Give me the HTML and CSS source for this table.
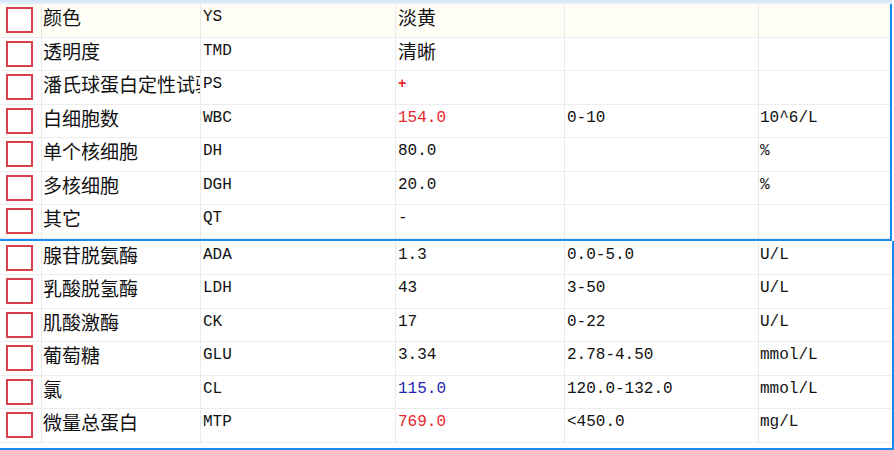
FILE: index.html
```html
<!DOCTYPE html>
<html>
<head>
<meta charset="utf-8">
<link rel="stylesheet" href="styles.css">
</head>
<body>
<div class="topbar"></div>
<div class="group g1">
  <div class="row first"><div class="c chk"><span class="box"></span></div><div class="c name">颜色</div><div class="c code">YS</div><div class="c val cjk">淡黄</div><div class="c rng"></div><div class="c unit"></div></div>
  <div class="row"><div class="c chk"><span class="box"></span></div><div class="c name">透明度</div><div class="c code">TMD</div><div class="c val cjk">清晰</div><div class="c rng"></div><div class="c unit"></div></div>
  <div class="row"><div class="c chk"><span class="box"></span></div><div class="c name">潘氏球蛋白定性试验</div><div class="c code">PS</div><div class="c val red plus">+</div><div class="c rng"></div><div class="c unit"></div></div>
  <div class="row"><div class="c chk"><span class="box"></span></div><div class="c name">白细胞数</div><div class="c code">WBC</div><div class="c val red">154.0</div><div class="c rng">0-10</div><div class="c unit">10^6/L</div></div>
  <div class="row"><div class="c chk"><span class="box"></span></div><div class="c name">单个核细胞</div><div class="c code">DH</div><div class="c val">80.0</div><div class="c rng"></div><div class="c unit">%</div></div>
  <div class="row"><div class="c chk"><span class="box"></span></div><div class="c name">多核细胞</div><div class="c code">DGH</div><div class="c val">20.0</div><div class="c rng"></div><div class="c unit">%</div></div>
  <div class="row"><div class="c chk"><span class="box"></span></div><div class="c name">其它</div><div class="c code">QT</div><div class="c val">-</div><div class="c rng"></div><div class="c unit"></div></div>
</div>
<div class="group g2">
  <div class="row"><div class="c chk"><span class="box"></span></div><div class="c name">腺苷脱氨酶</div><div class="c code">ADA</div><div class="c val">1.3</div><div class="c rng">0.0-5.0</div><div class="c unit">U/L</div></div>
  <div class="row"><div class="c chk"><span class="box"></span></div><div class="c name">乳酸脱氢酶</div><div class="c code">LDH</div><div class="c val">43</div><div class="c rng">3-50</div><div class="c unit">U/L</div></div>
  <div class="row"><div class="c chk"><span class="box"></span></div><div class="c name">肌酸激酶</div><div class="c code">CK</div><div class="c val">17</div><div class="c rng">0-22</div><div class="c unit">U/L</div></div>
  <div class="row"><div class="c chk"><span class="box"></span></div><div class="c name">葡萄糖</div><div class="c code">GLU</div><div class="c val">3.34</div><div class="c rng">2.78-4.50</div><div class="c unit">mmol/L</div></div>
  <div class="row"><div class="c chk"><span class="box"></span></div><div class="c name">氯</div><div class="c code">CL</div><div class="c val blue">115.0</div><div class="c rng">120.0-132.0</div><div class="c unit">mmol/L</div></div>
  <div class="row"><div class="c chk"><span class="box"></span></div><div class="c name">微量总蛋白</div><div class="c code">MTP</div><div class="c val red">769.0</div><div class="c rng">&lt;450.0</div><div class="c unit">mg/L</div></div>
</div>
</body>
</html>
```

FILE: styles.css
```css
html, body {
  margin: 0;
  padding: 0;
  background: #ffffff;
  width: 894px;
  height: 450px;
  overflow: hidden;
}
.topbar {
  height: 4px;
  width: 892px;
  background: linear-gradient(#d3e4f8, #e9f2fc);
}
.group {
  border-right: 2px solid #1a8cf0;
  border-bottom: 2px solid #1a8cf0;
  box-sizing: border-box;
}
.g1 {
  width: 892px;
  height: 236.5px;
}
.g2 {
  width: 894px;
  height: 209px;
  padding-top: 1px;
}
.row {
  display: grid;
  grid-template-columns: 42px 159px 195px 169px 194px 1fr;
  height: 33.5px;
}
.row.first {
  background: #fffef6;
}
.c {
  box-sizing: border-box;
  border-right: 1px solid #e9e9e9;
  border-bottom: 1px solid #ececec;
  padding-top: 1px;
  line-height: 25px;
  font-family: "Liberation Mono", "DejaVu Sans Mono", monospace;
  font-size: 16px;
  color: #111;
  white-space: nowrap;
}
.c.unit {
  border-right: none;
}
.chk {
  padding: 3px 0 0 6px;
}
.box {
  display: block;
  width: 27px;
  height: 26px;
  box-sizing: border-box;
  border: 2px solid #d8414c;
  background: #fff;
}
.name, .cjk {
  font-family: "Noto Sans CJK SC", sans-serif;
  font-size: 19px;
  padding-left: 1px;
  padding-top: 0;
}
.name { overflow: hidden; }
.code { padding-left: 2px; }
.val { padding-left: 2px; }
.rng { padding-left: 2px; }
.unit { padding-left: 1px; }
.red { color: #e3262c; }
.blue { color: #2323b4; }
.plus { font-weight: bold; font-size: 14px; }
```
